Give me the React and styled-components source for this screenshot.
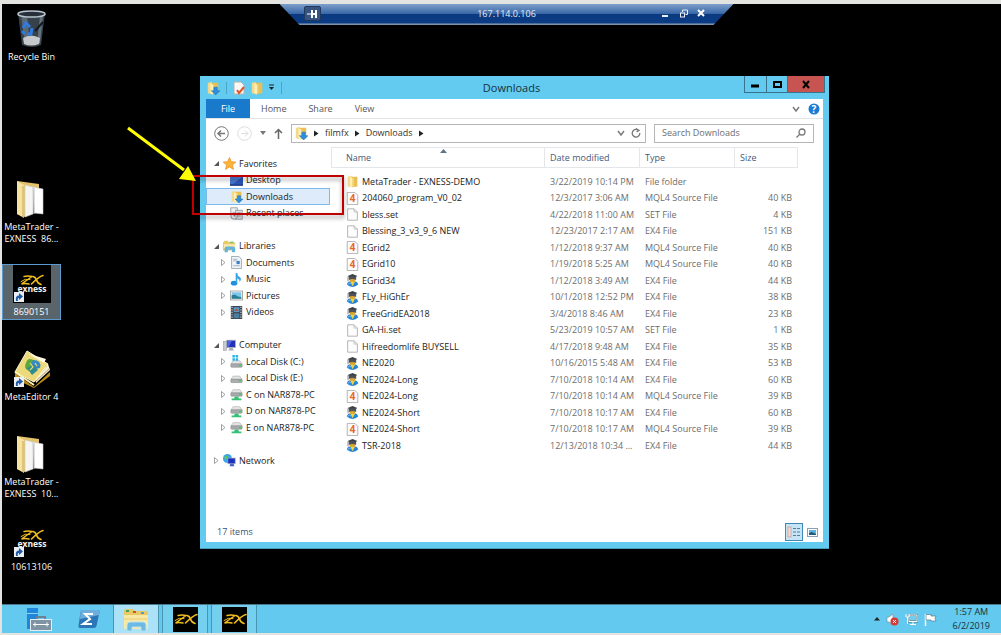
import styled, { createGlobalStyle } from "styled-components";

const GlobalStyle = createGlobalStyle`
    *{
        box-sizing: border-box;
    }
    body{
        margin: 0;
        background: #e3e3e1;
        font-family: "Open Sans", "Noto Sans", sans-serif;
        font-size: 9px;
        line-height: 12px;
    }
    button, input{
        font: inherit;
        color: inherit;
        padding: 0;
        margin: 0;
        border: none;
        background: none;
        border-radius: 0;
    }
    a{
        color: inherit;
        text-decoration: none;
    }
    svg{
        display: block;
        flex: none;
    }
`;

const files = [
    { icon: "folder", name: "MetaTrader - EXNESS-DEMO", date: "3/22/2019 10:14 PM", type: "File folder", size: "" },
    { icon: "mq4", name: "204060_program_V0_02", date: "12/3/2017 3:06 AM", type: "MQL4 Source File", size: "40 KB" },
    { icon: "blank", name: "bless.set", date: "4/22/2018 11:00 AM", type: "SET File", size: "4 KB" },
    { icon: "blank", name: "Blessing_3_v3_9_6 NEW", date: "12/23/2017 2:17 AM", type: "EX4 File", size: "151 KB" },
    { icon: "mq4", name: "EGrid2", date: "1/12/2018 9:37 AM", type: "MQL4 Source File", size: "40 KB" },
    { icon: "mq4", name: "EGrid10", date: "1/19/2018 5:25 AM", type: "MQL4 Source File", size: "40 KB" },
    { icon: "ex4", name: "EGrid34", date: "1/12/2018 3:49 AM", type: "EX4 File", size: "44 KB" },
    { icon: "ex4", name: "FLy_HiGhEr", date: "10/1/2018 12:52 PM", type: "EX4 File", size: "38 KB" },
    { icon: "ex4", name: "FreeGridEA2018", date: "3/4/2018 8:46 AM", type: "EX4 File", size: "23 KB" },
    { icon: "blank", name: "GA-Hi.set", date: "5/23/2019 10:57 AM", type: "SET File", size: "1 KB" },
    { icon: "blank", name: "Hifreedomlife BUYSELL", date: "4/17/2018 9:48 AM", type: "EX4 File", size: "35 KB" },
    { icon: "ex4", name: "NE2020", date: "10/16/2015 5:48 AM", type: "EX4 File", size: "53 KB" },
    { icon: "ex4", name: "NE2024-Long", date: "7/10/2018 10:14 AM", type: "EX4 File", size: "60 KB" },
    { icon: "mq4", name: "NE2024-Long", date: "7/10/2018 10:14 AM", type: "MQL4 Source File", size: "39 KB" },
    { icon: "ex4", name: "NE2024-Short", date: "7/10/2018 10:17 AM", type: "EX4 File", size: "60 KB" },
    { icon: "mq4", name: "NE2024-Short", date: "7/10/2018 10:17 AM", type: "MQL4 Source File", size: "39 KB" },
    { icon: "ex4", name: "TSR-2018", date: "12/13/2018 10:34 ...", type: "EX4 File", size: "44 KB" },
];

// null es una fila vacia entre grupos
const tree = [
    { icon: "star", label: "Favorites", root: true, open: true },
    { icon: "desktop", label: "Desktop", leaf: true },
    { icon: "downloads", label: "Downloads", leaf: true, selected: true },
    { icon: "recent", label: "Recent places", leaf: true },
    null,
    { icon: "libraries", label: "Libraries", root: true, open: true },
    { icon: "documents", label: "Documents" },
    { icon: "music", label: "Music" },
    { icon: "pictures", label: "Pictures" },
    { icon: "videos", label: "Videos" },
    null,
    { icon: "computer", label: "Computer", root: true, open: true },
    { icon: "diskC", label: "Local Disk (C:)" },
    { icon: "disk", label: "Local Disk (E:)" },
    { icon: "netDisk", label: "C on NAR878-PC" },
    { icon: "netDisk", label: "D on NAR878-PC" },
    { icon: "netDisk", label: "E on NAR878-PC" },
    null,
    { icon: "network", label: "Network", root: true },
];

const shortcuts = [
    { row: 1, icon: "bin", label: "Recycle Bin" },
    { row: 3, icon: "papers", label: "MetaTrader - EXNESS  86..." },
    { row: 4, icon: "exness", label: "8690151", selected: true },
    { row: 5, icon: "book", label: "MetaEditor 4" },
    { row: 6, icon: "papers", label: "MetaTrader - EXNESS  10..." },
    { row: 7, icon: "exness", label: "10613106" },
];

/* ---------- Iconos pequeños (16x16) ---------- */

const drive = (
    <>
        <path d="M4 5 L12 5 L15 9 L1 9 Z" fill="#e4e4e4" stroke="#9a9a9a" strokeWidth=".6" />
        <rect x="1" y="9" width="14" height="4" rx="1" fill="#a9adb0" stroke="#777" strokeWidth=".6" />
        <rect x="11" y="10" width="2.5" height="1.5" fill="#38d058" />
    </>
);

const folder = (
    <>
        <path d="M2 2 L7 1 L7 15 L2 14 Z" fill="#f3d98a" />
        <path d="M7 2 L14 2 L14 14 L7 15 Z" fill="#e8bf52" />
        <path d="M5 3 L8 4 L8 15.500 L5 14 Z" fill="#fff0b8" />
        <path d="M9 4 L9 14" stroke="#f8de90" />
    </>
);

const icons = {
    folder,
    downloads: (
        <>
            {folder}
            <path d="M9 7 h4 v4 h3 l-5 5 l-5 -5 h3 Z" fill="#2b8fe0" stroke="#1566b0" strokeWidth=".5" />
        </>
    ),
    blank: (
        <>
            <path d="M2 1 H10 L14 5 V15 H2 Z" fill="#fdfdfd" stroke="#a5a5a5" />
            <path d="M10 1 V5 H14" fill="none" stroke="#b5b5b5" />
        </>
    ),
    mq4: (
        <>
            <path d="M1.500 .5 H11 L14.500 4 V15.500 H1.500 Z" fill="#fbfbfb" stroke="#a2a2a2" />
            <text x="8" y="12.500" textAnchor="middle" fontSize="12" fontWeight="700" fill="#e8652a">4</text>
        </>
    ),
    ex4: (
        <>
            <path d="M1 13 Q2 9 6 9 H10 Q14 9 15 13 Q12 16 8 16 Q4 16 1 13 Z" fill="#2286dd" />
            <path d="M2 13 Q4 10 6 12" fill="none" stroke="#8cc8f5" />
            <circle cx="8" cy="7" r="3.500" fill="#d9a634" />
            <path d="M5.500 9.500 L8 15 L11 9.500 Z" fill="#f3d246" />
            <path d="M2 2.500 L8 0 L14 2.500 L8 6 Z" fill="#3c4148" />
            <path d="M3.500 3 V7.500 Q8 5 12.500 7.500 V3 Z" fill="#4d5359" />
            <path d="M2.500 3 V9" stroke="#6b6b6b" />
        </>
    ),
    star: (
        <path d="M8 .5 L10.300 5.700 L15.800 6.200 L11.600 9.800 L12.900 15.300 L8 12.300 L3.100 15.300 L4.400 9.800 L.2 6.200 L5.700 5.700 Z" fill="#fbb33a" stroke="#e88a1c" strokeWidth=".8" />
    ),
    desktop: (
        <>
            <rect x="0" y="3" width="16" height="11" fill="#2a56b5" />
            <path d="M0 3 H16 L4 12 H0 Z" fill="#4a78cf" />
            <rect x="0" y="13" width="16" height="1.500" fill="#1a357a" />
        </>
    ),
    recent: (
        <>
            <rect x="1" y="1" width="8" height="8" fill="#eee" stroke="#8c949c" />
            <rect x="7" y="4" width="8" height="11" fill="#dfe5ea" stroke="#8c949c" />
            <path d="M9 7 H13 M9 9 H13 M9 11 H13" stroke="#8c949c" />
            <circle cx="5" cy="11" r="4" fill="#f4f4f4" stroke="#7c848c" />
            <path d="M5 8.500 V11 H7" fill="none" stroke="#555" />
        </>
    ),
    libraries: (
        <>
            <path d="M0 3 L2 1 H6 L7 3 H15 V13 H0 Z" fill="#e9c866" />
            <rect x="1" y="5" width="14" height="5" fill="#f8e7a6" />
            <path d="M2 15 V11 Q2 8 5 8 H12 Q15 8 15 11 V15 H11 V12 H6 V15 Z" fill="#62b4de" />
            <rect x="8" y="2" width="5" height="2" fill="#7fc66a" />
        </>
    ),
    documents: (
        <>
            <path d="M2 .5 H11 L14 4 V15.500 H2 Z" fill="#f2f5f8" stroke="#8b98a6" />
            <path d="M4 4 H9 M4 6 H8 M4 12 H12" stroke="#8da3ba" />
            <rect x="8" y="6" width="4" height="4" fill="#3d7fc4" />
        </>
    ),
    music: (
        <>
            <ellipse cx="5" cy="12.500" rx="4" ry="3" fill="#1e90e0" />
            <path d="M7 12 V0 H9 Q9 4 12 5 Q15 7 12 11 Q12 8 9 6.500 V12 Z" fill="#38a5ea" />
        </>
    ),
    pictures: (
        <>
            <rect x=".5" y="2.500" width="15" height="11" fill="#fff" stroke="#999" />
            <rect x="2" y="4" width="12" height="8" fill="#7cc6ea" />
            <path d="M2 8 Q6 6 9 9 L14 10 V12 H2 Z" fill="#2b7f92" />
        </>
    ),
    videos: (
        <>
            <rect x="1" y="0" width="14" height="16" fill="#3b4550" />
            <path d="M2.500 1 V15 M13.500 1 V15" stroke="#c8d2da" strokeWidth="1.500" strokeDasharray="1.500 1.500" />
            <rect x="4.500" y="1.500" width="7" height="6" fill="#5a9ac8" />
            <rect x="4.500" y="9" width="7" height="6" fill="#4a7d9f" />
            <path d="M5 6 L8 3 L11 6 Z" fill="#b0553c" />
        </>
    ),
    computer: (
        <>
            <rect x="0" y="3" width="4" height="11" fill="#c6ccd2" stroke="#888" strokeWidth=".6" />
            <rect x="4.500" y="1.500" width="11" height="9" fill="#2330b8" stroke="#b0b6bd" />
            <path d="M5 2 H11 L7 10 H5 Z" fill="#4c66e0" />
            <path d="M8 11 H12 L13.500 14 H6.500 Z" fill="#a8aeb4" />
        </>
    ),
    disk: drive,
    diskC: (
        <>
            <g transform="translate(0 2)">{drive}</g>
            <path d="M3 0 H6 V3 H3 Z M7 0 H10 V3 H7 Z M3 4 H6 V7 H3 Z M7 4 H10 V7 H7 Z" fill="#25b4ec" />
        </>
    ),
    netDisk: (
        <>
            <g transform="translate(0 -3)">{drive}</g>
            <path d="M6 10.500 H10 L11 13 H14 V15 H2 V13 H5 Z" fill="#36c074" />
        </>
    ),
    network: (
        <>
            <circle cx="5.500" cy="5.500" r="5.500" fill="#3aa3e8" />
            <path d="M2 3 Q5 1 6 4 Q4 8 2 6 Z" fill="#5cc85a" />
            <rect x="6" y="5" width="9" height="7" fill="#1c2fc0" stroke="#a8b2c0" strokeWidth=".8" />
            <path d="M9 12 H13 L14 15 H8 Z" fill="#4664b8" />
        </>
    ),
};

function Icon({ name, size = 13 }) {
    return (
        <svg width={size} height={size} viewBox="0 0 16 16" aria-hidden="true">
            {icons[name]}
        </svg>
    );
}

/* ---------- Iconos grandes ---------- */

function ZxMark() {
    return (
        <g fill="none" stroke="#f0bd1d" strokeLinecap="round">
            <path d="M11 11.500 Q15 10.500 19 11.500 L8.500 19 Q12 18 16 19" strokeWidth="1.400" />
            <path d="M8 16.500 Q12 13 17 14.500" strokeWidth="1" />
            <path d="M20 11.500 Q22.500 12 23.500 15 Q24.500 18.500 28 19.500" strokeWidth="1.600" />
            <path d="M30 10.500 Q26 11.500 18.500 19" strokeWidth="1.600" />
        </g>
    );
}

function ShortcutArrow() {
    return (
        <g>
            <rect x="1" y="27" width="10" height="10" fill="#e9eef4" />
            <path d="M3 36 Q2 30.500 6 30.500 V28 L10 31.500 L6 35 V33 Q4 33 5 36 Z" fill="#2059a8" />
        </g>
    );
}

const bigIcons = {
    bin: (
        <>
            <path d="M5 3 L9 35 Q19 39 28 35 L32 3 Z" fill="#44515d" opacity=".8" />
            <path d="M8 5 L12 34 L17 35 L14 5 Z" fill="#75838f" opacity=".6" />
            <path d="M27 6 L24 34 L27 33 L30 6 Z" fill="#8492a0" opacity=".6" />
            <ellipse cx="18.500" cy="4" rx="13.500" ry="3" fill="#27303a" stroke="#b7c4cf" strokeWidth="1.500" />
            <path d="M10 28 Q18 23 27 28 L26 34 Q18 37 11 34 Z" fill="#c5c9cc" />
            <path d="M10 18 L13 13 L17 17 M19 18 L18 24 L14 24 M12 24 L9 21" fill="none" stroke="#2f7be0" strokeWidth="3" />
            <path d="M30 12 L22 21" stroke="#121a22" strokeWidth="2" />
        </>
    ),
    papers: (
        <>
            <path d="M4 1 L26 4 L26 10 L12 8 L12 37 L4 34 Z" fill="#e3c46c" />
            <path d="M4 1 L11 5 L11 38 L4 34 Z" fill="#f7e3a0" />
            <path d="M12 5 L20 7 L20 34 L12 37 Z" fill="#f5f5f3" stroke="#c9c9c9" strokeWidth=".6" />
            <path d="M20 7 L30 9 L30 34 L21 33 Z" fill="#fff" stroke="#c4c8cc" strokeWidth=".6" />
            <path d="M21 8 V34" stroke="#b9bdc4" />
            <path d="M10 6 V37" stroke="#c8a550" />
        </>
    ),
    exness: (
        <>
            <rect width="38" height="38" fill="#000" />
            <ZxMark />
            <text x="19" y="27" textAnchor="middle" fontSize="8.500" fontWeight="700" fill="#f2f2f2">exness</text>
            <ShortcutArrow />
        </>
    ),
    book: (
        <>
            <path d="M2 23 L21 37 L37 22 L37 26 L21 38 L2 29 Z" fill="#b88a18" />
            <path d="M23 33 L37 20 L35 14 L22 28 Z" fill="#f6efd4" />
            <path d="M23 31 L37 18 M23 28 L34 16" stroke="#9c8b55" strokeWidth=".8" />
            <path d="M14 1 L35 14 L21 32 L2 22 Z" fill="#ecd97a" stroke="#fff7d0" />
            <path d="M13 3 L33 9 L31 13 L14 3 Z" fill="#fffbe6" />
            <path d="M13 13 Q15 6 22 11 L16 21 Q10 18 13 13 Z" fill="#5aa83e" />
            <path d="M20 10 Q29 10 27 18 L22 19 L18 15 Z" fill="#3489c9" />
            <path d="M14 18 L21 15 L25 20 L19 25 Z" fill="#2f8b93" />
            <path d="M17 13 L20 17 L17 20 M22 13 L24 16" fill="none" stroke="#e8d76e" strokeWidth="1.200" />
            <path d="M2 22 L21 35" stroke="#fff3b4" strokeWidth="2" />
            <ShortcutArrow />
        </>
    ),
};

function BigIcon({ name }) {
    return (
        <svg width="38" height="38" viewBox="0 0 38 38" aria-hidden="true">
            {bigIcons[name]}
        </svg>
    );
}

function Zx() {
    return (
        <svg width="25" height="25" viewBox="0 0 25 25" aria-hidden="true">
            <rect width="25" height="25" fill="#000" />
            <g transform="translate(-6 -3)"><ZxMark /></g>
        </svg>
    );
}

function Expander({ open }) {
    return (
        <svg width="7" height="7" viewBox="0 0 7 7" aria-hidden="true">
            {open
                ? <path d="M6 1 V6 H1 Z" fill="#555" />
                : <path d="M1.500 .5 L5 3.500 L1.500 6.500 Z" fill="#fff" stroke="#8a8a8a" strokeWidth=".8" />}
        </svg>
    );
}

function Crumb() {
    return (
        <svg width="5" height="7" viewBox="0 0 5 7" aria-hidden="true">
            <path d="M0 .5 L4.500 3.500 L0 6.500 Z" fill="#222" />
        </svg>
    );
}

function Chevron() {
    return (
        <svg width="8" height="8" viewBox="0 0 8 8" aria-hidden="true">
            <path d="M1 2 L4 6 L7 2" fill="none" stroke="#7b7b7b" strokeWidth="1.500" />
        </svg>
    );
}

function ConnectionBar() {
    return (
        <StyledConnection>
            <div className="bar">
                <button className="pin" aria-label="Pin">
                    <svg width="11" height="10" viewBox="0 0 11 10" fill="none" stroke="#fff">
                        <path d="M0 5 H4" />
                        <path d="M5 1 V9 M9 1 V9 M5 5 H9" strokeWidth="2" />
                    </svg>
                </button>
                <span className="address">167.114.0.106</span>
                <button aria-label="Minimize">
                    <svg width="9" height="9" viewBox="0 0 9 9"><path d="M1 7 H7" stroke="#e8eef5" strokeWidth="2" /></svg>
                </button>
                <button aria-label="Restore">
                    <svg width="9" height="9" viewBox="0 0 9 9" fill="none" stroke="#e8eef5">
                        <path d="M3.500 3 V1 H8.500 V5.500 H6.500" /><rect x="1.500" y="4" width="4" height="4" />
                    </svg>
                </button>
                <button aria-label="Close">
                    <svg width="9" height="9" viewBox="0 0 9 9"><path d="M1 1 L7 7 M7 1 L1 7" stroke="#fff" strokeWidth="2" /></svg>
                </button>
            </div>
        </StyledConnection>
    );
}

function TitleBar() {
    return (
        <StyledTitleBar>
            <div className="quick">
                <Icon name="downloads" size={14} />
                <i />
                <button aria-label="Properties">
                    <svg width="13" height="14" viewBox="0 0 13 14">
                        <path d="M1 1 H8 L11 4 V13 H1 Z" fill="#fbf7f5" stroke="#b8b2b0" />
                        <path d="M4 9 L6 12 L11 6" fill="none" stroke="#e2562c" strokeWidth="2" />
                    </svg>
                </button>
                <button aria-label="New folder"><Icon name="folder" size={14} /></button>
                <button aria-label="Customize toolbar">
                    <svg width="7" height="7" viewBox="0 0 7 7">
                        <path d="M1 1 H6" stroke="#222" /><path d="M1 3 H6 L3.500 6 Z" fill="#222" />
                    </svg>
                </button>
                <i />
            </div>
            <h1>Downloads</h1>
            <div className="controls">
                <ControlButton $width={23} aria-label="Minimize">
                    <svg width="9" height="9" viewBox="0 0 9 9"><path d="M0 6 H8" stroke="#000" strokeWidth="3" /></svg>
                </ControlButton>
                <ControlButton $width={21} aria-label="Maximize">
                    <svg width="9" height="9" viewBox="0 0 9 9"><rect x="1" y="2" width="7" height="5" fill="none" stroke="#000" strokeWidth="2" /></svg>
                </ControlButton>
                <ControlButton $width={37} $close aria-label="Close">
                    <svg width="9" height="9" viewBox="0 0 9 9"><path d="M1 1 L7 8 M7 1 L1 8" stroke="#000" strokeWidth="2" /></svg>
                </ControlButton>
            </div>
        </StyledTitleBar>
    );
}

function Ribbon() {
    return (
        <StyledRibbon>
            <button className="file">File</button>
            <button>Home</button>
            <button>Share</button>
            <button>View</button>
            <div className="help">
                <Chevron />
                <svg width="12" height="12" viewBox="0 0 12 12" aria-label="Help">
                    <circle cx="6" cy="6" r="5.500" fill="#1a7ad4" />
                    <text x="6" y="9.500" textAnchor="middle" fontSize="10" fontWeight="700" fill="#fff">?</text>
                </svg>
            </div>
        </StyledRibbon>
    );
}

function AddressRow() {
    return (
        <StyledAddressRow>
            <button aria-label="Back">
                <svg width="15" height="15" viewBox="0 0 15 15" fill="none" stroke="#777">
                    <circle cx="7.500" cy="7.500" r="6.800" />
                    <path d="M11 7.500 H4 M7 4.500 L4 7.500 L7 10.500" strokeWidth="1.500" />
                </svg>
            </button>
            <button aria-label="Forward">
                <svg width="15" height="15" viewBox="0 0 15 15" fill="none" stroke="#ddd">
                    <circle cx="7.500" cy="7.500" r="6.800" />
                    <path d="M4 7.500 H11 M8 4.500 L11 7.500 L8 10.500" />
                </svg>
            </button>
            <button aria-label="Recent locations">
                <svg width="6" height="4" viewBox="0 0 6 4"><path d="M0 0 H6 L3 4 Z" fill="#777" /></svg>
            </button>
            <button aria-label="Up">
                <svg width="9" height="11" viewBox="0 0 9 11" fill="none" stroke="#666" strokeWidth="1.500">
                    <path d="M4.500 11 V1.500 M1 5 L4.500 1.500 L8 5" />
                </svg>
            </button>
            <div className="address">
                <Icon name="downloads" size={14} />
                <Crumb />
                <a href="#filmfx">filmfx</a>
                <Crumb />
                <a href="#downloads">Downloads</a>
                <Crumb />
                <span />
                <Chevron />
                <svg width="10" height="10" viewBox="0 0 10 10" fill="none" stroke="#777" strokeWidth="1.300">
                    <path d="M7 2 A3.800 3.800 0 1 0 8.800 5" /><path d="M5 .5 L8 2.500 L5.500 4" />
                </svg>
            </div>
            <label className="search">
                <input type="search" placeholder="Search Downloads" aria-label="Search Downloads" />
                <svg width="10" height="10" viewBox="0 0 10 10" fill="none" stroke="#777" strokeWidth="1.300">
                    <circle cx="6" cy="4" r="3" /><path d="M4 6 L.5 9.500" />
                </svg>
            </label>
        </StyledAddressRow>
    );
}

function NavPane() {
    return (
        <StyledNav>
            {tree.map((item, i) => (
                <li key={i}>
                    {item && (
                        <NavLink href="#" $root={item.root} $leaf={item.leaf} $selected={item.selected}>
                            {!item.leaf && <Expander open={item.open} />}
                            <Icon name={item.icon} />
                            {item.label}
                        </NavLink>
                    )}
                </li>
            ))}
        </StyledNav>
    );
}

function FileList() {
    return (
        <StyledTable>
            <thead>
                <tr>
                    <th className="name">
                        Name
                        <svg width="7" height="4" viewBox="0 0 7 4"><path d="M0 4 L3.500 0 L7 4 Z" fill="#5f7289" /></svg>
                    </th>
                    <th className="date">Date modified</th>
                    <th className="type">Type</th>
                    <th className="size">Size</th>
                </tr>
            </thead>
            <tbody>
                {files.map((file, i) => (
                    <tr key={i}>
                        <td><FileName><Icon name={file.icon} />{file.name}</FileName></td>
                        <td>{file.date}</td>
                        <td>{file.type}</td>
                        <td>{file.size}</td>
                    </tr>
                ))}
            </tbody>
        </StyledTable>
    );
}

function StatusBar() {
    return (
        <StyledStatus>
            <span>17 items</span>
            <button className="active" aria-label="Details view">
                <svg width="14" height="12" viewBox="0 0 14 12">
                    <rect x="1" y="1" width="3" height="10" fill="#f3dcd8" stroke="#b98f8c" strokeWidth=".6" />
                    <path d="M6 2.500 H9 M10 2.500 H13 M6 6 H9 M10 6 H13 M6 9.500 H9 M10 9.500 H13" stroke="#5b7a96" />
                </svg>
            </button>
            <button aria-label="Large icons view">
                <svg width="11" height="9" viewBox="0 0 11 9">
                    <rect x=".5" y=".5" width="10" height="8" fill="#fff" stroke="#8aa0b4" />
                    <rect x="2" y="2" width="7" height="5" fill="#5fb2de" />
                    <path d="M2 5 L5 4 L9 6 V7 H2 Z" fill="#1f5c7c" />
                </svg>
            </button>
        </StyledStatus>
    );
}

function Taskbar() {
    return (
        <StyledTaskbar>
            <TaskButton $width={52} aria-label="Server Manager">
                <svg width="26" height="24" viewBox="0 0 26 24">
                    <rect x="1" y="1" width="11" height="21" fill="#1f86dc" />
                    <path d="M1 6.500 H12" stroke="#8fd4f5" />
                    <path d="M11 12 V10 H19 V12" fill="none" stroke="#6d8292" strokeWidth="2" />
                    <rect x="4.500" y="12.500" width="21" height="11" fill="#7f93a3" stroke="#e6eef3" />
                    <path d="M7 17.500 H23 M9 15.500 V19.500 M21 15.500 V19.500" stroke="#fff" />
                </svg>
            </TaskButton>
            <TaskButton $width={48} aria-label="PowerShell">
                <svg width="22" height="18" viewBox="0 0 22 18">
                    <path d="M4 0 H20 Q22 0 21.500 2 L18.500 16 Q18 18 16 18 H2 Q0 18 .5 16 L2.500 2 Q3 0 4 0 Z" fill="#2c76b8" />
                    <path d="M4 0 H20 Q22 0 21.500 2 L21 5 L2 9 L2.500 2 Q3 0 4 0 Z" fill="#6daedc" />
                    <path d="M15 4 H7 L12 9 L5 14 H14" fill="none" stroke="#fff" strokeWidth="2" />
                </svg>
            </TaskButton>
            <div className="windows">
                <TaskButton $width={46} $state="active" aria-label="File Explorer">
                    <svg width="26" height="24" viewBox="0 0 26 24">
                        <path d="M1 4 Q1 2 3 2 H10 L12 4 H23 Q25 4 25 6 V22 H1 Z" fill="#e9c965" />
                        <path d="M1 8 H25 V22 H1 Z" fill="#fae9a4" />
                        <path d="M1 12 H25" stroke="#e6cb78" />
                        <path d="M3 4 H6" stroke="#3fa45b" strokeWidth="2" />
                        <path d="M10 5 H13" stroke="#d9512c" strokeWidth="2" />
                        <path d="M18 6 H21" stroke="#4c9fd4" strokeWidth="2" />
                        <path d="M4 24 V18 Q4 15 7 15 H20 Q23 15 23 18 V24 H18 V20 H9 V24 Z" fill="#6cb9e4" stroke="#b8e2f5" />
                    </svg>
                </TaskButton>
                <TaskButton $width={46} $state="open" aria-label="Exness 8690151"><Zx /></TaskButton>
                <TaskButton $width={46} $state="open" aria-label="Exness 10613106"><Zx /></TaskButton>
            </div>
            <div className="tray">
                <svg width="6" height="4" viewBox="0 0 6 4"><path d="M0 3.500 L3 0 L6 3.500 Z" fill="#222" /></svg>
                <svg width="13" height="13" viewBox="0 0 13 13">
                    <path d="M1 4 H3 L7 1 V12 L3 9 H1 Z" fill="#fff" stroke="#7b8e99" strokeWidth=".7" />
                    <circle cx="8.500" cy="8.500" r="4" fill="#d93a34" />
                    <path d="M7 7 L10 10 M10 7 L7 10" stroke="#fff" />
                </svg>
                <svg width="13" height="13" viewBox="0 0 13 13" fill="none">
                    <rect x="4" y="2" width="8" height="6.500" fill="#70cdee" stroke="#546e7c" strokeWidth="2" />
                    <rect x="4" y="2" width="8" height="6.500" stroke="#fff" />
                    <path d="M8 9 V11 M5 11.500 H11" stroke="#fff" />
                    <path d="M1 1 V4 H4 V1 M2.500 4 V11" stroke="#f4fafc" />
                </svg>
                <svg width="13" height="13" viewBox="0 0 13 13">
                    <path d="M1.500 1 V13" stroke="#fff" strokeWidth="1.500" />
                    <path d="M2 1.500 H7 V3 H12 L11 5.500 L12 8 H7 V7 H2 Z" fill="#fff" stroke="#5e7985" strokeWidth=".7" />
                </svg>
                <time>1:57 AM<br />6/2/2019</time>
            </div>
        </StyledTaskbar>
    );
}

function App() {
    return (
        <>
            <GlobalStyle />
            <Screen>
                <Desktop>
                    <ShortcutGrid>
                        {shortcuts.map((item) => (
                            <Shortcut key={item.row} href="#" $row={item.row} $selected={item.selected}>
                                <BigIcon name={item.icon} />
                                <span>{item.label}</span>
                            </Shortcut>
                        ))}
                    </ShortcutGrid>
                    <ConnectionBar />
                    <ExplorerWindow>
                        <TitleBar />
                        <div className="content">
                            <Ribbon />
                            <AddressRow />
                            <div className="panes">
                                <NavPane />
                                <FileList />
                            </div>
                            <StatusBar />
                        </div>
                    </ExplorerWindow>
                    <Highlight />
                    <Pointer width="72" height="58" viewBox="0 0 72 58" aria-hidden="true">
                        <path d="M2 2 L58 44" stroke="#ffff00" strokeWidth="3" />
                        <path d="M70 55 L53 53 L62 40 Z" fill="#ffff00" />
                    </Pointer>
                </Desktop>
                <Taskbar />
            </Screen>
        </>
    );
}

const Screen = styled.main`
    min-height: 100vh;
    display: flex;
    flex-direction: column;
    border: solid #e3e3e1;
    border-width: 4px 0 2px 2px;
    background: #000;
`;

const Desktop = styled.div`
    position: relative;
    flex: 1;
    min-height: 600px;
`;

const ShortcutGrid = styled.div`
    display: grid;
    grid-template-columns: 59px;
    grid-auto-rows: 85px;
    padding-top: 5px;
`;

const Shortcut = styled.a`
    grid-row: ${({ $row }) => $row};
    align-self: start;
    display: flex;
    flex-direction: column;
    align-items: center;
    padding-bottom: 1px;
    color: #fff;
    text-align: center;
    white-space: pre-wrap;
    border: 1px solid ${({ $selected }) => ($selected ? '#5b9bd0' : 'transparent')};
    background: ${({ $selected }) => ($selected ? '#59646b' : 'none')};
    span{
        margin: 3px -2px 0;
    }
`;

const StyledConnection = styled.div`
    position: absolute;
    top: 0;
    left: 0;
    right: 0;
    display: flex;
    justify-content: center;
    /* se desplaza un poco a la derecha del centro */
    padding-left: 10px;
    .bar{
        width: 454px;
        height: 21px;
        display: flex;
        align-items: center;
        gap: 9px;
        padding: 0 28px 2px 24px;
        color: #e4ebf3;
        background: linear-gradient(#7d9fcb, #3c69a8 45%, #0b3a80 50%, #0a3b84 90%, #7c92ad 95%);
        clip-path: polygon(0 0, 100% 0, 434px 100%, 20px 100%);
    }
    .pin{
        width: 17px;
        height: 15px;
        display: grid;
        place-items: center;
        border: 1px solid #20395e;
        border-radius: 2px;
        background: #36547f;
    }
    /* compensa los tres botones de la derecha */
    .address{
        flex: 1;
        padding-left: 32px;
        text-align: center;
    }
`;

const ExplorerWindow = styled.section`
    position: absolute;
    top: 72px;
    left: 198px;
    right: 172px;
    padding: 0 6px 6px;
    background: #63caf0;
    border: solid #4b9fbe;
    border-width: 0 0 1px;
    .content{
        background: #fff;
    }
    .panes{
        display: flex;
        min-height: 375px;
    }
`;

const StyledTitleBar = styled.header`
    display: grid;
    grid-template-columns: 1fr auto 1fr;
    height: 23px;
    align-items: center;
    /* los botones pisan el borde de la ventana */
    margin-right: -2px;
    h1{
        margin: 0 8px 0 0;
        font-size: 11px;
        line-height: 16px;
        font-weight: 400;
        color: #16323d;
    }
    .quick{
        display: flex;
        align-items: center;
        gap: 4px;
    }
    .quick i{
        width: 1px;
        height: 12px;
        margin: 0 2px;
        background: #4ba5c6;
    }
    .controls{
        display: flex;
        align-self: start;
        justify-content: flex-end;
    }
`;

const ControlButton = styled.button`
    width: ${({ $width }) => $width}px;
    height: 17px;
    display: grid;
    place-items: center;
    border: solid #39738a;
    border-width: 0 1px 1px 0;
    background: ${({ $close }) => ($close ? '#c75450' : 'none')};
    &:first-child{
        border-left-width: 1px;
    }
`;

const StyledRibbon = styled.nav`
    display: flex;
    height: 20px;
    border-bottom: 1px solid #e2e4e7;
    color: #555;
    button{
        padding: 0 11px;
    }
    .file{
        width: 44px;
        color: #fff;
        background: #1979ca;
    }
    .help{
        display: flex;
        align-items: center;
        gap: 8px;
        margin-left: auto;
        padding-right: 3px;
    }
`;

const StyledAddressRow = styled.div`
    display: flex;
    align-items: center;
    gap: 8px;
    height: 28px;
    padding: 0 9px 0 8px;
    color: #333;
    .address, .search{
        display: flex;
        align-items: center;
        height: 19px;
        border: 1px solid #b5b5b5;
    }
    .address{
        flex: 1;
        gap: 6px;
        padding: 0 4px 0 2px;
    }
    .address span{
        flex: 1;
    }
    .search{
        width: 160px;
        padding: 0 7px;
    }
    input{
        flex: 1;
        min-width: 0;
        outline: none;
        appearance: none;
    }
    input::placeholder{
        color: #6d6d6d;
        opacity: 1;
    }
`;

const StyledNav = styled.ul`
    width: 125px;
    margin: 0;
    padding: 8px 0 0;
    list-style: none;
    color: #222;
    li{
        height: 16px;
        display: flex;
    }
    li:nth-child(odd){
        height: 17px;
    }
`;

const NavLink = styled.a`
    display: flex;
    align-items: center;
    gap: 3px;
    width: 124px;
    padding-left: ${({ $root, $leaf }) => ($root ? 6 : $leaf ? 23 : 13)}px;
    border: 1px solid ${({ $selected }) => ($selected ? '#7db9ea' : 'transparent')};
    background: ${({ $selected }) => ($selected ? '#ddebfa' : 'none')};
    white-space: nowrap;
`;

const StyledTable = styled.table`
    flex: 1;
    align-self: flex-start;
    margin-right: 25px;
    table-layout: fixed;
    border-spacing: 0;
    color: #6d6d6d;
    th, td{
        padding: 0 0 0 5px;
        text-align: left;
        font-weight: 400;
        white-space: nowrap;
    }
    th{
        position: relative;
        height: 21px;
        color: #46597a;
        border: solid #e4e6ea;
        border-width: 1px 1px 1px 0;
    }
    th:first-child{
        padding-left: 14px;
        border-left-width: 1px;
    }
    th svg{
        position: absolute;
        top: 1px;
        left: 10px;
        right: 0;
        margin: auto;
    }
    .date, .type{
        width: 95px;
    }
    .size{
        width: 63px;
    }
    td{
        height: 16px;
    }
    tbody tr:nth-child(odd) td{
        height: 17px;
    }
    td:first-child{
        padding-left: 15px;
    }
    td:last-child{
        padding-right: 6px;
        text-align: right;
    }
    /* separa la cabecera de la primera fila */
    tbody::before{
        content: "";
        display: block;
        height: 5px;
    }
`;

const FileName = styled.span`
    display: flex;
    align-items: center;
    gap: 3px;
    color: #222;
`;

const StyledStatus = styled.footer`
    display: flex;
    align-items: center;
    height: 20px;
    padding: 0 2px 0 11px;
    color: #35567c;
    span{
        flex: 1;
    }
    button{
        width: 18px;
        height: 18px;
        display: grid;
        place-items: center;
    }
    .active{
        border: 1px solid #3f87b5;
        background: #c5e5f6;
    }
`;

const StyledTaskbar = styled.footer`
    display: flex;
    height: 29px;
    padding-left: 11px;
    background: #63c9ee;
    border-top: 1px solid #49798c;
    color: #16303a;
    .windows{
        display: flex;
        gap: 3px;
    }
    .tray{
        display: flex;
        align-items: center;
        gap: 6px;
        margin-left: auto;
        padding-right: 11px;
    }
    time{
        margin-left: 10px;
        line-height: 14px;
        text-align: center;
    }
`;

const TaskButton = styled.button`
    width: ${({ $width }) => $width}px;
    display: grid;
    place-items: center;
    background: ${({ $state }) => ({ active: '#ace2f7', open: '#75d0ef' })[$state] || 'none'};
    border: solid #4795b0;
    border-width: ${({ $state }) => ($state ? '0 1px' : '0')};
`;

const Highlight = styled.div`
    position: absolute;
    top: 171px;
    left: 190px;
    width: 152px;
    height: 40px;
    border: 2px solid #c00000;
    filter: drop-shadow(0 3px 2px rgba(0, 0, 0, .4));
`;

const Pointer = styled.svg`
    position: absolute;
    top: 122px;
    left: 124px;
`;

export default App;
